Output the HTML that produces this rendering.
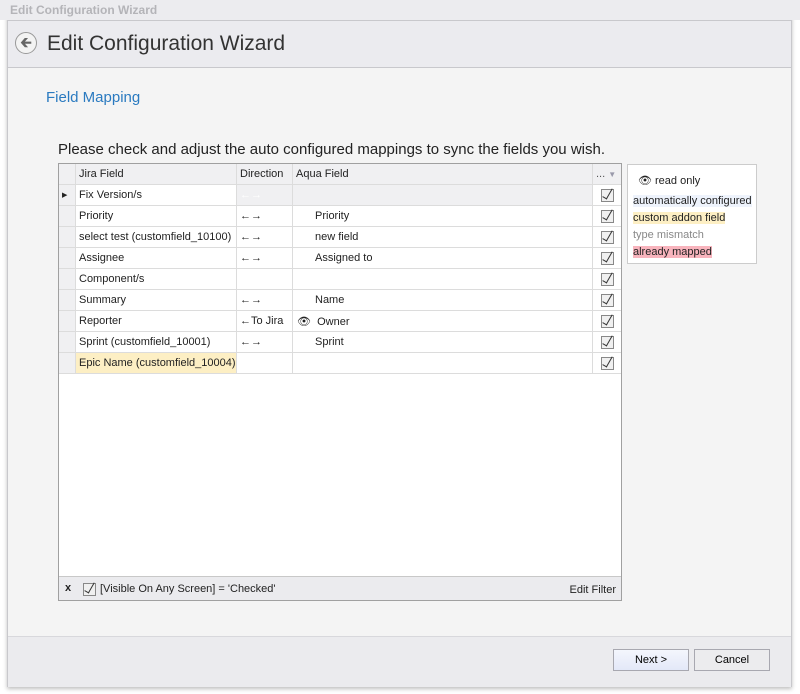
<!DOCTYPE html>
<html><head><style>
body{margin:0;width:800px;height:694px;background:#fff;font-family:"Liberation Sans",sans-serif;position:relative;overflow:hidden}
.a{position:absolute}
.win{left:7px;top:0;width:785px;height:687px;background:#f4f4f4;border:1px solid #c8c8cc;box-sizing:border-box;box-shadow:0 2px 4px rgba(0,0,0,.25)}
table{border-collapse:collapse;font-size:11px;color:#222;table-layout:fixed}
td{border:1px solid #dcdcdc;height:21px;padding:0 3px;white-space:nowrap;box-sizing:border-box;overflow:hidden}
.cb{display:inline-block;width:11px;height:11px;border:1px solid #888;background:#f0f0f0;position:relative;vertical-align:middle}
.cb:after{content:"";position:absolute;left:3px;top:-3px;width:4px;height:11px;border-right:1.5px solid #333;border-bottom:1.5px solid #333;transform:rotate(30deg)}
</style></head><body>
<div class="a win"></div>
<div class="a" style="left:0;top:0;width:800px;height:20px;background:#ececef"></div>
<div class="a" style="left:10px;top:3px;font-size:12px;font-weight:bold;color:#b4b4b8">Edit Configuration Wizard</div>
<div class="a" style="left:8px;top:20px;width:783px;height:46px;background:#ebebef;border-top:1px solid #c8c8cc;border-bottom:1px solid #c8c8cc"></div>
<div class="a" style="left:15px;top:32px;width:22px;height:22px;border-radius:50%;border:1px solid #999;background:#f3f3f3;box-sizing:border-box;text-align:center;font-size:14px;line-height:19px;color:#666;font-weight:bold">&#129136;</div>
<div class="a" style="left:47px;top:32px;font-size:21px;color:#333">Edit Configuration Wizard</div>
<div class="a" style="left:46px;top:89px;font-size:15px;color:#2a7ac0">Field Mapping</div>
<div class="a" style="left:58px;top:141px;font-size:15px;color:#222">Please check and adjust the auto configured mappings to sync the fields you wish.</div>
<div class="a" style="left:58px;top:163px;width:564px;height:438px;background:#fff;border:1px solid #a0a0a0;box-sizing:border-box;overflow:hidden">
<table style="width:564px;margin:-1px 0 0 -1px">
<colgroup><col style="width:17px"><col style="width:161px"><col style="width:56px"><col style="width:300px"><col style="width:30px"></colgroup>
<tr style="background:#f0f0f2"><td></td><td>Jira Field</td><td>Direction</td><td>Aqua Field</td><td style="color:#555">... <span style="color:#99a;font-size:8px">▼</span></td></tr>
<tr><td style="background:#f0f0f2;font-size:7px">▶</td><td>Fix Version/s</td><td style="background:#f0f0f2;color:#fff">←→</td><td style="background:#f0f0f2"></td><td style="text-align:center"><span class="cb"></span></td></tr>
<tr><td style="background:#f0f0f2"></td><td>Priority</td><td>←→</td><td style="padding-left:22px">Priority</td><td style="text-align:center"><span class="cb"></span></td></tr>
<tr><td style="background:#f0f0f2"></td><td>select test (customfield_10100)</td><td>←→</td><td style="padding-left:22px">new field</td><td style="text-align:center"><span class="cb"></span></td></tr>
<tr><td style="background:#f0f0f2"></td><td>Assignee</td><td>←→</td><td style="padding-left:22px">Assigned to</td><td style="text-align:center"><span class="cb"></span></td></tr>
<tr><td style="background:#f0f0f2"></td><td>Component/s</td><td></td><td></td><td style="text-align:center"><span class="cb"></span></td></tr>
<tr><td style="background:#f0f0f2"></td><td>Summary</td><td>←→</td><td style="padding-left:22px">Name</td><td style="text-align:center"><span class="cb"></span></td></tr>
<tr><td style="background:#f0f0f2"></td><td>Reporter</td><td>←To Jira</td><td style="padding-left:4px">👁&nbsp;&nbsp;Owner</td><td style="text-align:center"><span class="cb"></span></td></tr>
<tr><td style="background:#f0f0f2"></td><td>Sprint (customfield_10001)</td><td>←→</td><td style="padding-left:22px">Sprint</td><td style="text-align:center"><span class="cb"></span></td></tr>
<tr><td style="background:#f0f0f2"></td><td style="background:#fdefc4">Epic Name (customfield_10004)</td><td></td><td></td><td style="text-align:center"><span class="cb"></span></td></tr>
</table>
<div class="a" style="left:0;top:412px;width:563px;height:25px;background:#ebebee;border-top:1px solid #c8c8c8;font-size:11px;color:#222">
<span class="a" style="left:6px;top:5px;font-weight:bold">x</span>
<span class="a" style="left:24px;top:6px"><span class="cb"></span></span>
<span class="a" style="left:41px;top:6px">[Visible On Any Screen] = 'Checked'</span>
<span class="a" style="right:6px;top:7px">Edit Filter</span></div>
</div>
<div class="a" style="left:627px;top:164px;width:130px;height:100px;background:#fff;border:1px solid #ccc;box-sizing:border-box;font-size:11px;color:#222">
<div class="a" style="left:10px;top:9px">👁 read only</div>
<div class="a" style="left:5px;top:30px;background:#eef3fc">automatically configured</div>
<div class="a" style="left:5px;top:47px;background:#fdefc4">custom addon field</div>
<div class="a" style="left:5px;top:64px;color:#888">type mismatch</div>
<div class="a" style="left:5px;top:81px;background:#f8b4bd">already mapped</div>
</div>
<div class="a" style="left:8px;top:636px;width:783px;height:50px;background:#ebebee;border-top:1px solid #d8d8dc"></div>
<div class="a" style="left:613px;top:649px;width:76px;height:22px;border:1px solid #a8a8b0;background:linear-gradient(#f4f6fd,#e3e8f8);box-sizing:border-box;font-size:11px;text-align:center;line-height:20px">Next &gt;</div>
<div class="a" style="left:694px;top:649px;width:76px;height:22px;border:1px solid #a8a8b0;background:#ececee;box-sizing:border-box;font-size:11px;text-align:center;line-height:20px">Cancel</div>
</body></html>
